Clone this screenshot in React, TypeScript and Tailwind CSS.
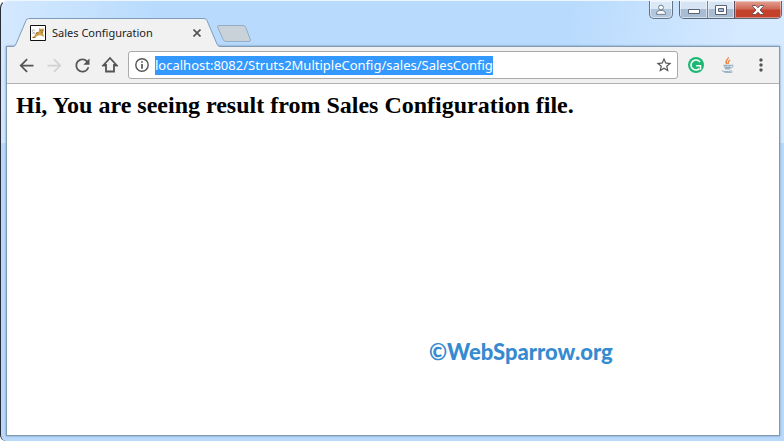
import React from 'react';
import { MdArrowBack, MdArrowForward, MdMoreVert, MdRefresh, MdStarBorder } from 'react-icons/md';

const PAGE_URL = 'localhost:8082/Struts2MultipleConfig/sales/SalesConfig';

const TomcatIcon: React.FC = () => (
  <svg viewBox="0 0 16 16" className="size-4 shrink-0" aria-hidden="true">
    <path d="M.5.5h15v15H.5z" fill="#fff" stroke="#111" />
    <path d="M5 6Q2 3 2.5 6.5L4.5 8.5M2 8.5l3-1" fill="none" stroke="#b5b5b5" />
    <path
      d="M9 3l1.5.8H12L13.5 3l.3 2.5-.8 2 .2 2 1 1.5-.8.8-2.2-1.2-2.2-.3-2.2 1-1.5 1.7H2l.3-1 2-.8.7-2 1.5-2 2.5-.7z"
      fill="#d0a04c"
    />
    <path d="M6 8.5l2-1M3 12.500h2M10.3 5.500h.9M12.2 5.500h.9M11 7.200h1.8" stroke="#7d5a2d" strokeWidth=".8" />
  </svg>
);

const HomeIcon: React.FC = () => (
  <svg viewBox="0 0 18 18" className="size-[18px]" aria-hidden="true">
    <path
      d="M9 2L2.6 9H5v6.500h8V9h2.400z"
      fill="none"
      stroke="currentColor"
      strokeWidth="1.8"
    />
    <path d="M1 9.900h4M13 9.900h4" stroke="currentColor" />
  </svg>
);

const InfoIcon: React.FC = () => (
  <svg viewBox="0 0 14 14" className="size-[14px]" aria-hidden="true">
    <circle cx="7" cy="7" r="6.2" fill="none" stroke="currentColor" strokeWidth="1.4" />
    <path d="M7 3.2v1.6M7 6v4.8" stroke="currentColor" strokeWidth="1.7" />
  </svg>
);

const GrammarlyIcon: React.FC = () => (
  <svg viewBox="0 0 16 16" className="size-4" aria-hidden="true">
    <circle cx="8" cy="8" r="8" fill="#1cb974" />
    <path
      d="M12 5A5 5 0 1 0 11.4 11.7"
      fill="none"
      stroke="#fff"
      strokeWidth="1.6"
    />
    <path d="M8.2 8.8h4.3v4" fill="none" stroke="#fff" strokeWidth="1.5" />
  </svg>
);

const JavaIcon: React.FC = () => (
  <svg viewBox="0 0 16 16" className="size-4" aria-hidden="true">
    <path d="M8.3.3c.8 2-4.6 3-1.4 6.8M10.3 3c-3.4 1.2-1.6 2.2-2.2 4" fill="none" stroke="#ee8036" strokeWidth="1.3" />
    <path d="M3.8 8.2h7l-.7 4.2H5z" fill="#9db5c8" />
    <path
      d="M11 8.3c3-1 2.8 2.2-.4 2.8M3.4 8.3h7.8M5 10.4h5.4M2 13.3c-.8 1.7 9.2 1.6 9.8.2M4.5 15.5c3 .3 6 .2 8-.6"
      fill="none"
      stroke="#8faabf"
    />
    <path d="M5.4 9.3h4" stroke="#e6eef5" strokeWidth=".7" />
  </svg>
);

const PersonIcon: React.FC = () => (
  <svg viewBox="0 0 12 12" className="size-3" aria-hidden="true">
    <circle cx="6" cy="3.5" r="2.4" fill="#fff" stroke="#6d7a8a" />
    <path d="M1.5 10.3V9.2Q2 6.6 4.3 6.6h3.4q2.3 0 2.8 2.6v1.1z" fill="#fff" stroke="#6d7a8a" />
  </svg>
);

const MinimizeIcon: React.FC = () => (
  <svg viewBox="0 0 12 12" className="size-3" aria-hidden="true">
    <path d="M.5 5.5h11v4H.5z" fill="#fff" stroke="#596273" />
  </svg>
);

const MaximizeIcon: React.FC = () => (
  <svg viewBox="0 0 12 10" className="h-[10px] w-3" aria-hidden="true">
    <path d="M.5.5h11v9H.5z" fill="#fff" stroke="#596273" />
    <path d="M3.5 3.5h5v3h-5z" fill="#a5bcdb" stroke="#596273" />
  </svg>
);

const CloseIcon: React.FC = () => (
  <svg viewBox="0 0 12 10" className="h-[10px] w-3" aria-hidden="true">
    <path
      d="M.5.5h3.3L6 2.8 8.2.5h3.3v.8L8 5l3.5 3.7v.8H8.2L6 7.2 3.8 9.5H.5v-.8L4 5 .5 1.3z"
      fill="#fff"
      stroke="#5c4a52"
      strokeWidth=".9"
    />
  </svg>
);

const CaptionButtons: React.FC = () => (
  <div className="ml-auto flex h-[18px] gap-[6px]">
    <button
      type="button"
      aria-label="Profile"
      className="flex w-6 items-center justify-center rounded-b-[5px] border border-t-0 border-[#647489] bg-linear-to-b from-[#dbe9f7] from-45% to-[#b0c7de] to-50% inset-ring inset-ring-white/50"
    >
      <PersonIcon />
    </button>
    <div className="flex overflow-hidden rounded-b-[5px] border border-t-0 border-[#596779]">
      <button
        type="button"
        aria-label="Minimize"
        className="flex w-7 items-center justify-center border-r border-[#74859a] bg-linear-to-b from-[#d6e4f3] from-45% to-[#a8bdd3] to-50% inset-ring inset-ring-white/50"
      >
        <MinimizeIcon />
      </button>
      <button
        type="button"
        aria-label="Maximize"
        className="flex w-[27px] items-center justify-center border-r border-[#5e4d58] bg-linear-to-b from-[#d6e4f3] from-45% to-[#a8bdd3] to-50% inset-ring inset-ring-white/50"
      >
        <MaximizeIcon />
      </button>
      <button
        type="button"
        aria-label="Close"
        className="flex w-[46px] items-center justify-center bg-linear-to-b from-[#e3a193] via-[#cf6a57] via-45% to-[#c3402a] to-55% inset-ring inset-ring-white/40"
      >
        <CloseIcon />
      </button>
    </div>
  </div>
);

const TitleBar: React.FC = () => (
  <header className="flex h-[45px] items-start pr-[2px] pl-3">
    <div className="relative mt-[17px] flex h-[29px] w-[207px] items-center pr-[19px] pl-[17px]">
      <svg viewBox="0 0 207 29" className="absolute inset-0 size-full" aria-hidden="true">
        <path d="M0 28.5Q2 28.5 3 26L13 2.5Q14 .5 15.5 .5H191Q193 .5 194 2.5L204 26Q205 28.5 207 28.5V29H0z" fill="#f1f1f1" />
        <path d="M0 28.5Q2 28.5 3 26L13 2.5Q14 .5 15.5 .5H191Q193 .5 194 2.5L204 26Q205 28.5 207 28.5" fill="none" stroke="#7e9dbc" />
      </svg>
      <div className="relative flex flex-1 items-center gap-[6px]">
        <TomcatIcon />
        <span className="flex-1 whitespace-nowrap text-[11px] leading-4 text-[#222]">
          Sales Configuration
        </span>
        <button type="button" aria-label="Close tab" className="text-[#555]">
          <svg viewBox="0 0 8 8" className="size-2" aria-hidden="true">
            <path d="M.5.5l7 7M7.5.5l-7 7" stroke="currentColor" strokeWidth="1.7" />
          </svg>
        </button>
      </div>
    </div>
    <button type="button" aria-label="New tab" className="mt-6 -ml-[3px]">
      <svg viewBox="0 0 34 17" className="h-[17px] w-[34px]" aria-hidden="true">
        <path
          d="M2 .5h24q2 0 2.8 2L33.3 14.5q.4 2-1.3 2H9q-2 0-2.8-2L.7 2.5Q.2.5 2 .5z"
          fill="#c9d1d9"
          stroke="#93abc3"
        />
      </svg>
    </button>
    <CaptionButtons />
  </header>
);

const Toolbar: React.FC = () => (
  <nav className="flex h-[37px] items-center border-b border-[#b0b0b0] bg-[#f1f1f1] pr-2 pl-[5px] text-[#555]">
    <button type="button" aria-label="Back" className="flex w-7 justify-center">
      <MdArrowBack size={21} />
    </button>
    <button type="button" aria-label="Forward" className="flex w-7 justify-center text-[#d2d2d2]" disabled>
      <MdArrowForward size={21} />
    </button>
    <button type="button" aria-label="Reload" className="flex w-7 justify-center">
      <MdRefresh size={21} />
    </button>
    <button type="button" aria-label="Home" className="flex w-7 justify-center">
      <HomeIcon />
    </button>
    <div className="ml-1 flex h-7 flex-1 items-center rounded-[3px] border border-[#a9a9a9] bg-white px-[6px]">
      <InfoIcon />
      <input
        type="text"
        aria-label="Address"
        defaultValue={PAGE_URL}
        className="ml-[6px] field-sizing-content h-[19px] bg-[#3399ff] pt-px text-[13px] text-white outline-none"
      />
      <button type="button" aria-label="Bookmark this page" className="-mr-[2px] ml-auto">
        <MdStarBorder size={18} />
      </button>
    </div>
    <div className="ml-[10px] flex items-center">
      <button type="button" aria-label="Grammarly">
        <GrammarlyIcon />
      </button>
      <button type="button" aria-label="Java" className="ml-4">
        <JavaIcon />
      </button>
      <button type="button" aria-label="Menu" className="ml-[15px]">
        <MdMoreVert size={20} />
      </button>
    </div>
  </nav>
);

const App: React.FC = () => (
  <div className="flex min-h-screen flex-col rounded-tl-lg rounded-bl-md border-t border-l border-t-[#eef6ff] border-l-[#292d38] bg-[#b9d9fb] bg-[linear-gradient(100deg,#d5e9ff_0%,#b7dafd_20%,#b7dafd_70%,#d5e9ff_92%)] bg-size-[100%_142px] bg-no-repeat font-['Noto_Sans','Open_Sans',sans-serif]">
    <TitleBar />
    <div className="mr-1 mb-[5px] ml-[5px] flex flex-1 flex-col border border-[#829bb5] bg-white shadow-[0_0_2px_#6f8faf]">
      <Toolbar />
      <main className="flex flex-1 flex-col px-[9px] pt-[7px]">
        <h2 className="font-['Liberation_Serif',serif] text-2xl leading-7 font-bold text-black">
          Hi, You are seeing result from Sales Configuration file.
        </h2>
        <p className="mt-auto mb-[69px] ml-[413px] font-['Lato',sans-serif] text-[22px] leading-7 font-black text-[#368bd0]">
          ©WebSparrow.org
        </p>
      </main>
    </div>
  </div>
);

export default App;
